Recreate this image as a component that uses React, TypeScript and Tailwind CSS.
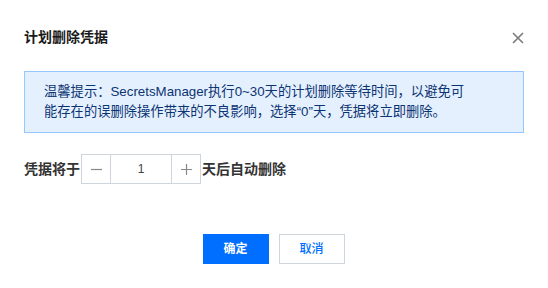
import { useState } from 'react';

export default function App() {
  const [days, setDays] = useState(1);

  return (
    <div
      className="w-[548px] h-[288px] bg-white relative"
      style={{ fontFamily: '"Liberation Sans", "Noto Sans CJK SC", sans-serif' }}
    >
      {/* Close */}
      <button className="absolute left-[512px] top-[32px] w-[12px] h-[12px] flex items-center justify-center">
        <svg width="12" height="12" viewBox="0 0 12 12" fill="none">
          <path d="M1 1 L11 11 M11 1 L1 11" stroke="#7a7a7a" strokeWidth="1.6" />
        </svg>
      </button>

      <div className="px-6 pt-[27px]">
        {/* Title */}
        <h1 className="text-[14px] leading-[20px] font-bold text-[#1a1a1a]">计划删除凭据</h1>

        {/* Notice */}
        <div className="mt-6 border border-[#97c7ff] bg-[#e5f0ff] pl-[19px] pr-4 py-[10px] text-[13.3px] leading-[20px] text-[#0b3472]">
          温馨提示：SecretsManager执行0~30天的计划删除等待时间，以避免可
          <br />
          能存在的误删除操作带来的不良影响，选择“0”天，凭据将立即删除。
        </div>

        {/* Stepper row */}
        <div className="mt-[21px] flex items-center text-[14px] font-bold text-[#333]">
          <span className="w-[57px]">凭据将于</span>
          <div className="flex h-[30px] border border-[#cfd5de]">
            <button
              onClick={() => setDays(Math.max(0, days - 1))}
              className="w-[29px] flex items-center justify-center border-r border-[#cfd5de]"
            >
              <svg width="11" height="11" viewBox="0 0 11 11">
                <path d="M0 5.5 H11" stroke="#888" strokeWidth="1.2" />
              </svg>
            </button>
            <div className="w-[60px] flex items-center justify-center text-[12px] font-normal text-[#444]">
              {days}
            </div>
            <button
              onClick={() => setDays(Math.min(30, days + 1))}
              className="w-[29px] flex items-center justify-center border-l border-[#cfd5de]"
            >
              <svg width="11" height="11" viewBox="0 0 11 11">
                <path d="M0 5.5 H11 M5.5 0 V11" stroke="#888" strokeWidth="1.2" />
              </svg>
            </button>
          </div>
          <span className="ml-[1px]">天后自动删除</span>
        </div>

        {/* Footer */}
        <div className="mt-[50px] flex justify-center gap-[10px] pr-[1px]">
          <button className="w-[66px] h-[30px] bg-[#006eff] text-white text-[12px] font-bold">确定</button>
          <button className="w-[66px] h-[30px] bg-white border border-[#cfd5de] text-[#006eff] text-[12px] font-medium">
            取消
          </button>
        </div>
      </div>
    </div>
  );
}
